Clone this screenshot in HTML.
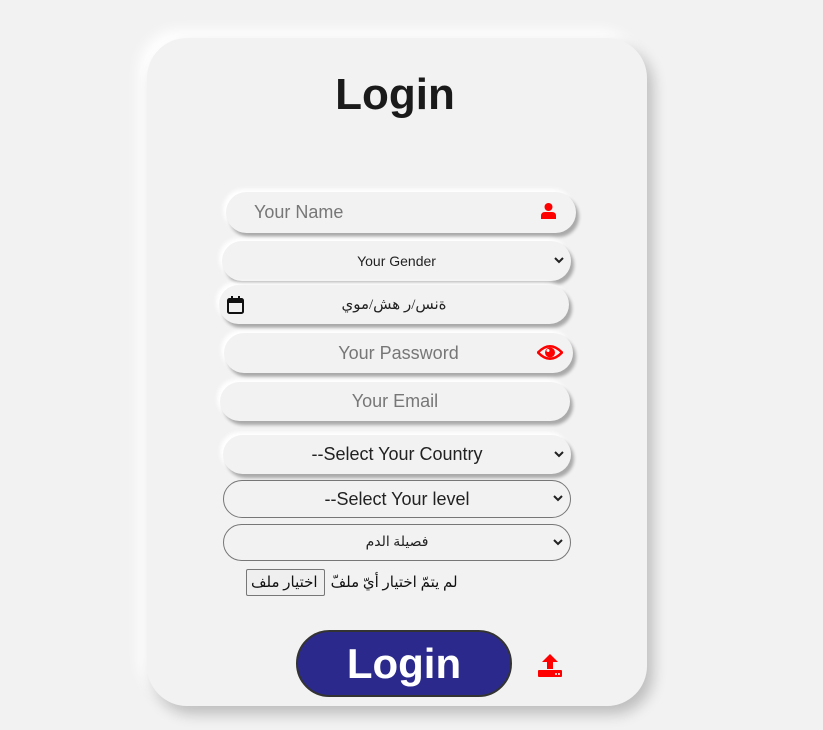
<!DOCTYPE html>
<html><head><meta charset="utf-8"><style>
*{box-sizing:border-box;margin:0;padding:0}
body{width:823px;height:730px;background:#f2f2f2;font-family:"Liberation Sans",Arial,sans-serif;position:relative;overflow:hidden}
.card{position:absolute;left:147px;top:38px;width:500px;height:668px;border-radius:40px;background:#f2f2f2;box-shadow:6px 8px 14px rgba(0,0,0,.22),-8px -8px 14px #fff}
h1{position:absolute;left:0;width:790px;top:70px;text-align:center;font-size:44px;font-weight:bold;color:#1a1a1a}
.f{position:absolute;border-radius:22px;background:#f2f2f2;box-shadow:3px 4px 3px rgba(0,0,0,.3),-3px -3px 4px #fff;color:#777;font-size:18px;display:flex;align-items:center}
.c{justify-content:center}
.chev{position:absolute;right:6px;top:50%;margin-top:-5px}
.b{position:absolute;left:223px;width:348px;border:1px solid #777;border-radius:20px;display:flex;align-items:center;justify-content:center;color:#222}
</style></head><body>
<div class="card"></div>
<h1>Login</h1>
<div class="f" style="left:226px;top:192px;width:350px;height:41px;padding-left:28px">Your Name
<svg style="position:absolute;right:20px;top:11px" width="15" height="16" viewBox="0 0 15 16"><circle cx="7.5" cy="4" r="4" fill="red"/><path d="M0 16V13Q0 9 4 9H11Q15 9 15 13V16Z" fill="red"/></svg></div>
<div class="f c" style="left:222px;top:241px;width:349px;height:40px;font-size:14px;color:#222">Your Gender<svg class="chev" width="12" height="9" viewBox="0 0 12 9"><path d="M2 2l4 4 4-4" stroke="#222" stroke-width="2" fill="none"/></svg></div>
<div class="f c" style="left:219px;top:285px;width:350px;height:39px;font-size:15px;color:#222;font-family:'Liberation Serif','DejaVu Sans',serif">ةنس/ر هش/موي
<svg style="position:absolute;left:8px;top:11px" width="17" height="18" viewBox="0 0 17 18"><rect x="1" y="3" width="15" height="14" rx="1.5" stroke="#111" stroke-width="2" fill="none"/><rect x="1" y="3" width="15" height="4" fill="#111"/><rect x="4" y="0" width="2" height="4" fill="#111"/><rect x="11" y="0" width="2" height="4" fill="#111"/></svg></div>
<div class="f c" style="left:224px;top:333px;width:349px;height:40px">Your Password
<svg style="position:absolute;right:10px;top:11px" width="26" height="17" viewBox="0 0 26 17"><path d="M1 8.5Q13 -4 25 8.5Q13 21 1 8.5Z" fill="none" stroke="red" stroke-width="2.5"/><circle cx="13" cy="8.5" r="5" fill="red"/><circle cx="11" cy="6.5" r="1.5" fill="#fff"/></svg></div>
<div class="f c" style="left:220px;top:382px;width:350px;height:39px">Your Email</div>
<div class="f c" style="left:223px;top:435px;width:348px;height:39px;color:#222">--Select Your Country<svg class="chev" width="12" height="9" viewBox="0 0 12 9"><path d="M2 2l4 4 4-4" stroke="#222" stroke-width="2" fill="none"/></svg></div>
<div class="b" style="top:480px;height:38px;font-size:18px">--Select Your level<svg class="chev" width="12" height="9" viewBox="0 0 12 9"><path d="M2 2l4 4 4-4" stroke="#222" stroke-width="2" fill="none"/></svg></div>
<div class="b" style="top:524px;height:37px;font-size:14px;font-family:'Liberation Serif','DejaVu Sans',serif">فصيلة الدم<svg class="chev" width="12" height="9" viewBox="0 0 12 9"><path d="M2 2l4 4 4-4" stroke="#222" stroke-width="2" fill="none"/></svg></div>
<div style="position:absolute;left:246px;top:568px;height:28px;display:flex;align-items:center;font-family:'Liberation Serif','DejaVu Sans',serif;font-size:15px;color:#111">
<span style="border:1px solid #777;background:#efefef;height:27px;padding:0 6px 0 4px;display:flex;align-items:center;border-radius:2px">اختيار ملف</span>
<span style="margin-left:6px">لم يتمّ اختيار أيّ ملفّ</span></div>
<div style="position:absolute;left:296px;top:630px;width:216px;height:67px;border-radius:34px;background:#2b2a8c;border:2px solid #333;color:#fff;font-size:42px;font-weight:bold;display:flex;align-items:center;justify-content:center">Login</div>
<svg style="position:absolute;left:538px;top:654px" width="24" height="23" viewBox="0 0 24 23"><path d="M12 0L20 8H15V15H9V8H4Z" fill="red"/><rect x="0" y="16" width="24" height="7" rx="1" fill="red"/><circle cx="18" cy="20" r="1" fill="#fff"/><circle cx="21" cy="20" r="1" fill="#fff"/></svg>
</body></html>
